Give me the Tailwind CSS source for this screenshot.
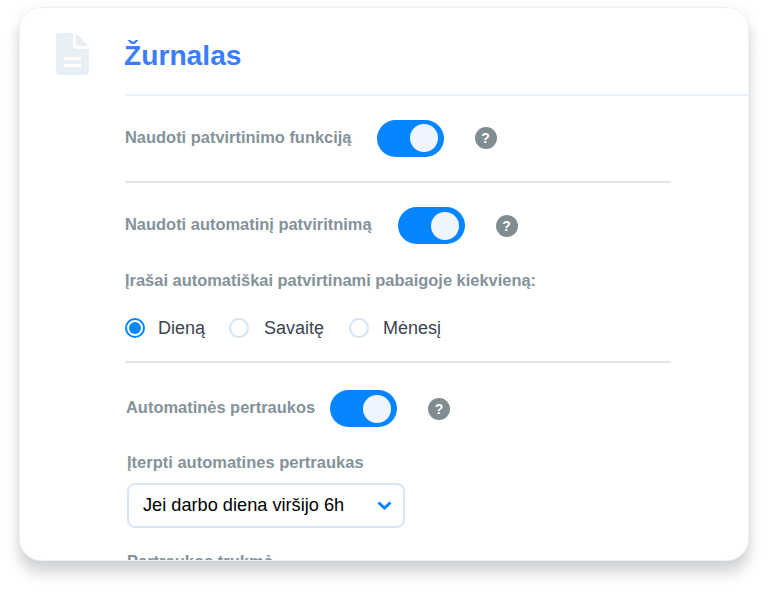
<!DOCTYPE html>
<html lang="lt">
<head>
    <meta charset="UTF-8">
    <meta name="viewport" content="width=device-width, initial-scale=1.0">
    <title>Žurnalas</title>
    <script src="https://cdn.jsdelivr.net/npm/@tailwindcss/browser@4"></script>
</head>
<body class="bg-white h-[594px] overflow-hidden font-['Liberation_Sans',Arial,sans-serif]">
    <div class="pt-[7px] pl-[19px]">
        <div class="w-[730px] h-[554px] bg-white rounded-[22px] border border-[#eef2f7] overflow-hidden shadow-[0_12px_14px_rgba(40,50,60,0.2),0_0_12px_rgba(40,50,60,0.05)] flex">
            <!-- icon column -->
            <div class="w-[105px] shrink-0 pt-[25px] pl-[36px]">
                <svg width="33" height="42" viewBox="0 0 33 42">
                    <path d="M3 0H17V13a3 3 0 0 0 3 3H33V38a4 4 0 0 1-4 4H4a4 4 0 0 1-4-4V3a3 3 0 0 1 3-3Z" fill="#e6eef6"/>
                    <path d="M20 0.5L33 13H21a1 1 0 0 1-1-1Z" fill="#e6eef6"/>
                    <rect x="8" y="24" width="17" height="3" fill="#fff"/>
                    <rect x="8" y="31" width="17" height="3" fill="#fff"/>
                </svg>
            </div>
            <!-- content -->
            <div class="flex-1 min-w-0">
                <h1 class="h-[86px] pt-[28px] -ml-[1px] text-[28.2px] leading-[38px] font-bold text-[#3b7dfb]">Žurnalas</h1>
                <div class="h-[2px] bg-[#e8f0f8]"></div>

                <div class="w-[546px]">
                    <div class="flex items-center h-[87px] pb-[1px] border-b-2 border-[#e3e6ea]">
                        <span class="pb-[2px] text-[16.45px] font-bold text-[#84929a]">Naudoti patvirtinimo funkciją</span>
                        <span class="ml-[25px] w-[67px] h-[37px] rounded-full bg-[#0585ff] flex items-center justify-end pr-[6px]"><span class="w-[28px] h-[28px] rounded-full bg-[#eef5ff]"></span></span>
                        <span class="ml-[31px] mb-[1px] w-[22px] h-[22px] rounded-full bg-[#7f8c91] text-white text-[14px] leading-[22px] font-bold text-center">?</span>
                    </div>

                    <div class="flex items-center mt-[24px] h-[37px]">
                        <span class="pb-[2px] text-[16.45px] font-bold text-[#84929a]">Naudoti automatinį patviritnimą</span>
                        <span class="ml-[26px] w-[67px] h-[37px] rounded-full bg-[#0585ff] flex items-center justify-end pr-[6px]"><span class="w-[28px] h-[28px] rounded-full bg-[#eef5ff]"></span></span>
                        <span class="ml-[31px] w-[22px] h-[22px] rounded-full bg-[#7f8c91] text-white text-[14px] leading-[22px] font-bold text-center">?</span>
                    </div>
                    <p class="mt-[25px] text-[16.45px] leading-[22px] font-bold text-[#84929a]">Įrašai automatiškai patvirtinami pabaigoje kiekvieną:</p>

                    <div class="flex items-center mt-[25px] h-[24px] text-[18px] text-[#3a4352]">
                        <span class="w-[20px] h-[20px] rounded-full border-2 border-[#0585ff] flex items-center justify-center"><span class="w-[12px] h-[12px] rounded-full bg-[#0585ff]"></span></span>
                        <span class="ml-[13px]">Dieną</span>
                        <span class="ml-[24px] w-[20px] h-[20px] rounded-full border-2 border-[#d5e3f3]"></span>
                        <span class="ml-[15px]">Savaitę</span>
                        <span class="ml-[25px] w-[20px] h-[20px] rounded-full border-2 border-[#d5e3f3]"></span>
                        <span class="ml-[14px]">Mėnesį</span>
                    </div>
                    <div class="mt-[21px] h-[2px] bg-[#e3e6ea]"></div>

                    <div class="flex items-center mt-[27px] h-[37px] pl-[1px]">
                        <span class="pb-[2px] text-[16.45px] font-bold text-[#84929a]">Automatinės pertraukos</span>
                        <span class="ml-[15px] w-[67px] h-[37px] rounded-full bg-[#0585ff] flex items-center justify-end pr-[6px]"><span class="w-[28px] h-[28px] rounded-full bg-[#eef5ff]"></span></span>
                        <span class="ml-[31px] w-[22px] h-[22px] rounded-full bg-[#7f8c91] text-white text-[14px] leading-[22px] font-bold text-center">?</span>
                    </div>

                    <p class="mt-[24px] pl-[2px] text-[16.5px] leading-[22px] font-bold text-[#84929a]">Įterpti automatines pertraukas</p>
                    <div class="ml-[2px] mt-[10px] w-[278px] h-[45px] rounded-[8px] border-2 border-[#d7e6f7] flex items-center justify-between pl-[14px] pr-[11px] text-[18.2px] text-black">
                        <span>Jei darbo diena viršijo 6h</span>
                        <svg width="15" height="9" viewBox="0 0 15 9"><path d="M1.5 1.5L7.5 7L13.5 1.5" fill="none" stroke="#0585ff" stroke-width="3"/></svg>
                    </div>
                    <p class="mt-[22px] pl-[2px] text-[16.5px] leading-[22px] font-bold text-[#84929a]">Pertraukos trukmė</p>
                </div>
            </div>
        </div>
    </div>
</body>
</html>
